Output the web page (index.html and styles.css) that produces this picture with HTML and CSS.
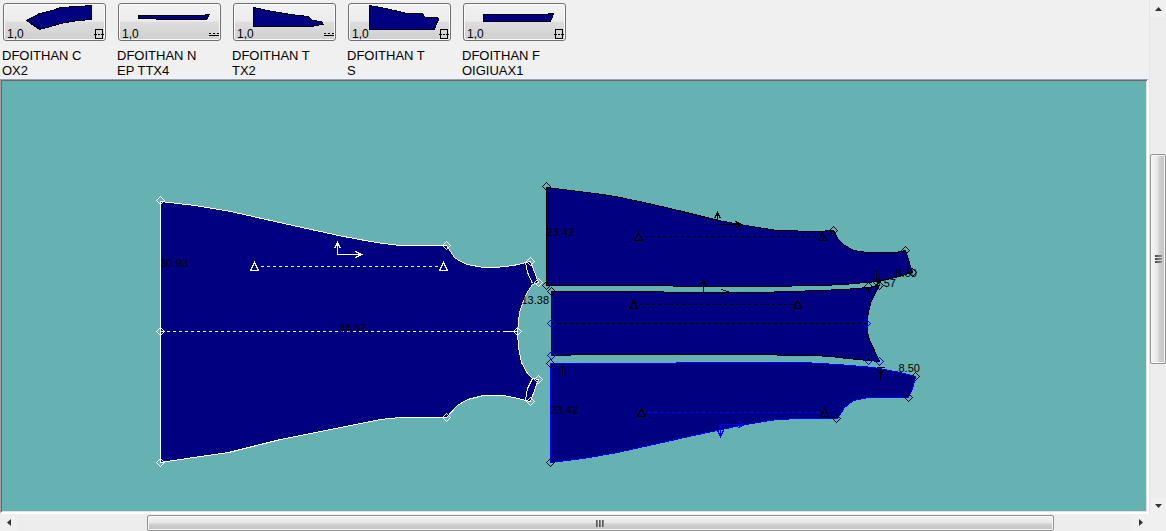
FILE: index.html
```html
<!DOCTYPE html>
<html lang="vi">
<head>
<meta charset="utf-8">
<title>Pattern workspace</title>
<link rel="stylesheet" href="styles.css">
</head>
<body>
<main class="workspace">
  <nav class="pieces" aria-label="Pieces">
    <div class="piece">
      <button class="piece-button" type="button" aria-labelledby="p1">
        <svg class="thumbnail" aria-hidden="true"><g transform="translate(-4 -4)"><path class="shape" d="M26 20L39 13L52 10L60 7L78 6L91 5V19L78 20L60 23L50 26L39 29Z"/><path class="mark" d="M95.500 29.500h7v9h-7zM94 34.500h3M98 34.500h2M101 34.500h3"/></g></svg>
        <span class="count">1,0</span>
      </button>
      <span class="name" id="p1">DFOITHAN C<br>OX2</span>
    </div>
    <div class="piece">
      <button class="piece-button" type="button" aria-labelledby="p2">
        <svg class="thumbnail" aria-hidden="true"><g transform="translate(-119 -4)"><path class="shape" d="M138 15H204L206 14H209L206 19H172L138 18Z"/><path class="mark" d="M209 33.500h2M213 33.500h2M217 33.500h2M209 35.500h10"/></g></svg>
        <span class="count">1,0</span>
      </button>
      <span class="name" id="p2">DFOITHAN N<br>EP TTX4</span>
    </div>
    <div class="piece">
      <button class="piece-button" type="button" aria-labelledby="p3">
        <svg class="thumbnail" aria-hidden="true"><g transform="translate(-234 -4)"><path class="shape" d="M253 7L267 10L290 14L308 16L312 20L321 21L323 24L315 25L312 26H253Z"/><path class="mark" d="M324 33.500h2M328 33.500h2M332 33.500h2M324 35.500h10"/></g></svg>
        <span class="count">1,0</span>
      </button>
      <span class="name" id="p3">DFOITHAN T<br>TX2</span>
    </div>
    <div class="piece">
      <button class="piece-button" type="button" aria-labelledby="p4">
        <svg class="thumbnail" aria-hidden="true"><g transform="translate(-349 -4)"><path class="shape" d="M369 5L385 8L407 13H422L424 17H437L438 19L436 23L434 29H369Z"/><path class="mark" d="M440.500 29.500h7v9h-7zM439 34.500h3M443 34.500h2M446 34.500h3"/></g></svg>
        <span class="count">1,0</span>
      </button>
      <span class="name" id="p4">DFOITHAN T<br>S</span>
    </div>
    <div class="piece">
      <button class="piece-button" type="button" aria-labelledby="p5">
        <svg class="thumbnail" aria-hidden="true"><g transform="translate(-464 -4)"><path class="shape" d="M483 14H548V13H553L550 21H483Z"/><path class="mark" d="M555.500 29.500h7v9h-7zM554 34.500h3M558 34.500h2M561 34.500h3"/></g></svg>
        <span class="count">1,0</span>
      </button>
      <span class="name" id="p5">DFOITHAN F<br>OIGIUAX1</span>
    </div>
  </nav>

  <section class="canvas" aria-label="Pattern drawing">
    <svg class="drawing">
      <defs>
        <path id="node" d="M0 -4L4 0L0 4L-4 0Z"/>
        <path id="grain" d="M0 -5L4 3H-4Z"/>
        <path id="axes" d="M0 -12V0H24M-3 -6L0 -12L3 -6M18 -3L24 0L18 3"/>
      </defs>
      <g transform="translate(-1.500 -80.500)">
        <g class="white">
          <path class="fabric" d="M160 201L195 205L230 211L288 224L338 235L370 241L383 243L400 245H446L454 257L460 261L467 264L483 267H495L513 265L530 261L538 282L532 284L526 293L522 303L519 312L517 331L518 347L521 362L527 373L532 378L538 379L530 401L513 397L503 395H483L467 399L457 405L446 417H400L380 419L370 421L345 426L280 439L228 452L193 457L160 462Z"/>
          <path class="line" d="M525 262L527 272L532 283M532 378L527 388L525 400M504 331H517"/>
          <path class="line dashed" d="M160 331H504M260 266H440"/>
          <use href="#grain" x="254" y="267"/><use href="#grain" x="443" y="267"/>
          <use href="#axes" x="337" y="254"/>
          <use href="#node" x="160" y="200"/><use href="#node" x="160" y="331"/><use href="#node" x="160" y="462"/>
          <use href="#node" x="446" y="245"/><use href="#node" x="530" y="261"/><use href="#node" x="538" y="282"/>
          <use href="#node" x="517" y="331"/><use href="#node" x="538" y="379"/><use href="#node" x="530" y="401"/><use href="#node" x="446" y="417"/>
        </g>
        <g class="black">
          <path class="fabric" d="M546 187L595 193L615 196L648 203L678 210L718 220L740 224L757 227L777 230L817 231L833 230L837 238L843 244L853 250L867 252H895L905 250L912 272L895 277L877 281L843 284L820 285L765 286H673V285H546Z"/>
          <path class="fabric" d="M551 291H663L664 292H755L792 291L843 289L868 287L879 285L875 292L870 303L867 317V330L868 337L873 348L879 361L868 360L847 358L830 356L812 355L740 354H592L551 355Z"/>
          <path class="line" d="M559 274V285M876 269V281M868 287L869 297M869 347L868 360M703 280V292M700 286L703 280L706 286M721 289L727 291L721 294"/>
          <path class="line dashed" d="M644 236H818M639 304H794M551 323H867"/>
          <use href="#grain" x="638" y="237"/><use href="#grain" x="822" y="237"/>
          <use href="#grain" x="633" y="305"/><use href="#grain" x="797" y="305"/>
          <use href="#axes" x="717" y="224"/>
        </g>
        <g class="blue">
          <path class="fabric" d="M550 363H676V362H803L837 364L873 367L900 372L915 376L912 388L908 397H868L853 400L844 407L837 418H800L777 419L757 422L740 425L693 435L653 444L617 452L583 458L550 462Z"/>
          <path class="line dashed" d="M647 412H820"/>
          <path class="line" d="M720 436V424H744M717 430L720 436L723 430M738 421L744 424L738 427"/>
          <use href="#node" x="551" y="323"/><use href="#node" x="551" y="355"/><use href="#node" x="866" y="323"/>
          <use href="#node" x="868" y="360"/><use href="#node" x="879" y="361"/>
        </g>
        <g class="black">
          <path class="line" d="M562 364V375M880 368V379M876 369L880 373L884 369M876 367H884"/>
          <use href="#grain" x="641" y="413"/><use href="#grain" x="824" y="413"/>
          <use href="#node" x="546" y="186"/><use href="#node" x="546" y="285"/><use href="#node" x="551" y="291"/>
          <use href="#node" x="833" y="230"/><use href="#node" x="905" y="250"/><use href="#node" x="912" y="272"/>
          <use href="#node" x="879" y="285"/><use href="#node" x="868" y="286"/><use href="#node" x="876" y="281"/>
          <use href="#node" x="550" y="363"/><use href="#node" x="550" y="462"/><use href="#node" x="915" y="376"/>
          <use href="#node" x="908" y="397"/><use href="#node" x="836" y="418"/>
        </g>
        <g class="measure">
          <text x="160" y="266">30.93</text><text x="338" y="331">84.47</text><text x="521" y="303">13.38</text>
          <text x="546" y="235">23.42</text><text x="895" y="276">8.50</text><text x="874" y="286">3.57</text>
          <text x="898" y="371">8.50</text><text x="550" y="413">23.42</text>
        </g>
      </g>
    </svg>
  </section>

  <div class="scroll scroll-y">
    <button class="arrow" type="button" aria-label="Scroll up"><svg width="7" height="4"><path d="M0 4L3.500 0L7 4Z"/></svg></button>
    <div class="space-top"></div>
    <div class="thumb"><i></i><i></i><i></i></div>
    <div class="space-bottom"></div>
    <button class="arrow" type="button" aria-label="Scroll down"><svg width="7" height="4"><path d="M0 0H7L3.500 4Z"/></svg></button>
  </div>
  <div class="scroll scroll-x">
    <button class="arrow" type="button" aria-label="Scroll left"><svg width="4" height="7"><path d="M4 0V7L0 3.500Z"/></svg></button>
    <div class="space-left"></div>
    <div class="thumb"><i></i><i></i><i></i></div>
    <div class="space-right"></div>
    <button class="arrow" type="button" aria-label="Scroll right"><svg width="4" height="7"><path d="M0 0V7L4 3.500Z"/></svg></button>
  </div>
</main>
</body>
</html>
```
FILE: styles.css
```css
* { box-sizing: border-box; }

body {
  margin: 0;
  background: #f0f0f0;
  color: #000;
  font-family: "Liberation Sans", Arial, sans-serif;
}

.workspace {
  display: grid;
  grid-template-columns: minmax(0, 1fr) 17px;
  grid-template-rows: auto minmax(0, 1fr) 17px;
  height: 100vh;
}

.pieces {
  display: flex;
  gap: 10px;
  padding: 3px 2px 0;
  background: linear-gradient(#f0f0f0 75px, #eef0fa 75px);
}

.piece { width: 105px; padding-bottom: 1px; }

.piece-button {
  display: block;
  position: relative;
  width: 103px;
  height: 38px;
  margin-left: 1px;
  padding: 0;
  border: 1px solid #707070;
  border-radius: 3px;
  background: linear-gradient(#f2f2f2 0%, #ebebeb 48%, #dddddd 50%, #cfcfcf 100%);
  box-shadow: inset 0 0 0 1px #fafafa;
  font-family: inherit;
}

.thumbnail {
  display: block;
  width: 100%;
  height: 100%;
  shape-rendering: crispEdges;
}

.shape { fill: #000080; stroke: #000; transform: translate(0.5px, 0.5px); }
.mark { fill: none; stroke: #000; }

.count {
  position: absolute;
  left: 3px;
  bottom: 0;
  font-size: 12px;
  line-height: 12px;
}

.name {
  display: block;
  padding-top: 7px;
  font-size: 13px;
  line-height: 15px;
  white-space: nowrap;
}

.canvas {
  overflow: hidden;
  border: solid;
  border-width: 1px 2px 2px 1px;
  border-color: #a0a0a0 #fff #fff #a0a0a0;
  background: #66b2b2;
  box-shadow: inset 1px 1px #696969, inset -1px -1px #e3e3e3;
}

.drawing {
  display: block;
  width: 100%;
  height: 100%;
  padding: 1px 0 0 1px;
  shape-rendering: crispEdges;
}

.fabric { fill: #000080; }
.line, use { fill: none; }
.dashed { stroke-dasharray: 3 3; }
.white { stroke: #fff; }
.black { stroke: #000; }
.blue { stroke: #00f; }

.measure {
  fill: #000;
  font-size: 11px;
}

.scroll {
  display: flex;
  background: #ededed;
}

.scroll-y {
  grid-column: 2;
  grid-row: 1 / 3;
  flex-direction: column;
  border-left: 1px solid #e5e5e5;
}

.scroll-x { grid-column: 1; grid-row: 3; }

.arrow {
  display: flex;
  flex: 0 0 17px;
  align-items: center;
  justify-content: center;
  padding: 0;
  border: 0;
  background: #f0f0f0;
}

.arrow svg { fill: #333; }

.thumb {
  display: flex;
  align-items: center;
  justify-content: center;
  gap: 1px;
  border: 1px solid #939393;
  border-radius: 2px;
}

.thumb i { background: linear-gradient(90deg, #444, #999); }

.scroll-y .thumb {
  flex: 208;
  flex-direction: column;
  background: linear-gradient(90deg, #f5f5f5, #e8e8e9 45%, #cfcfd1 60%, #c2c2c5);
  box-shadow: inset 0 0 0 1px #f6f6f6;
}

.scroll-y .thumb i { width: 7px; height: 2px; }

.scroll-x .thumb {
  flex: 907;
  margin-top: 1px;
  background: linear-gradient(#f5f5f5, #e8e8e9 45%, #cfcfd1 60%, #c2c2c5);
  box-shadow: inset 0 0 0 1px #f6f6f6;
}

.scroll-x .thumb i { width: 2px; height: 7px; }

.space-top { flex: 138; }
.space-bottom { flex: 134; }
.space-left { flex: 130; }
.space-right { flex: 78; }
```
